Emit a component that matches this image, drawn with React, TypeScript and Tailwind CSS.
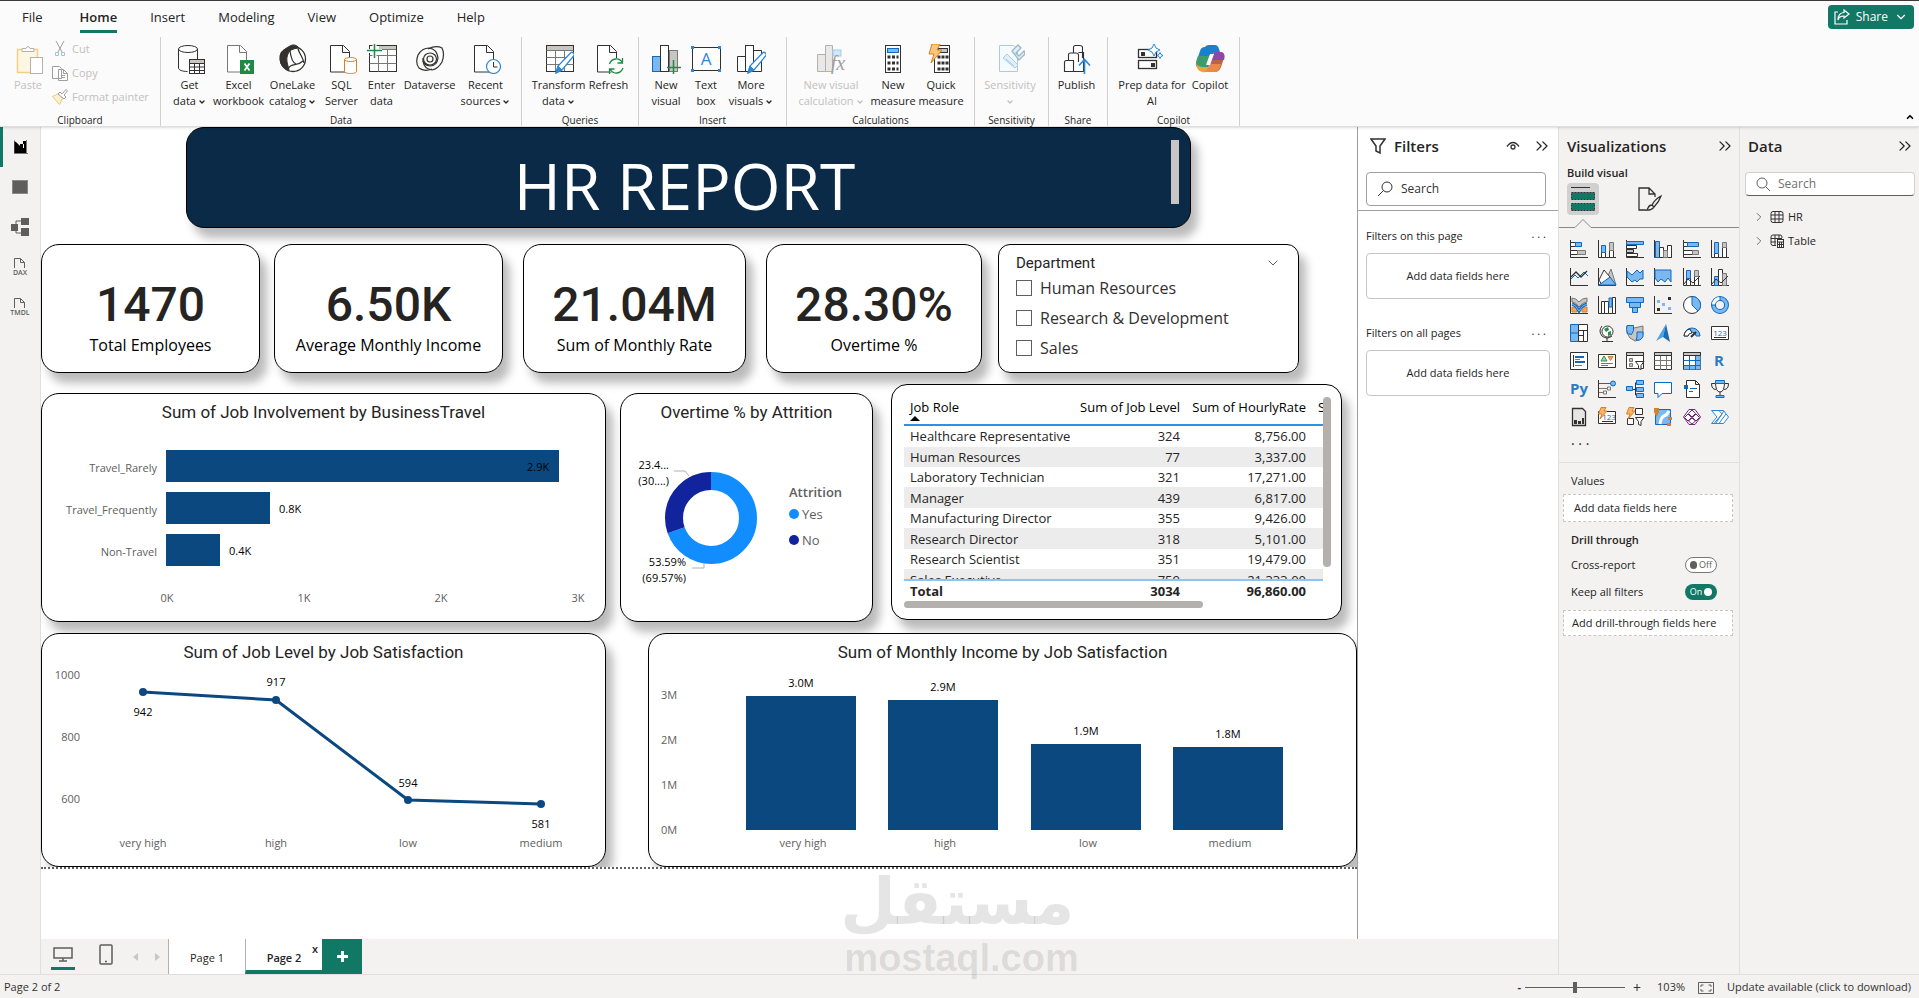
import type { ReactNode } from "react";
import { ChevronDown, ChevronRight, ChevronUp, ChevronsRight } from "lucide-react";

const INK = "#323130";
const GREY = "#c8c6c4";
const MID = "#797775";
const SKY = "#7ab8ef";
const BLUE = "#1068bf";
const GREEN = "#117865";
const ORANGE = "#d4812c";

function Icon30({ children }: { children: ReactNode }) {
  return (
    <svg viewBox="0 0 30 30" className="h-[30px] w-[30px] shrink-0" fill="none" stroke={INK} aria-hidden="true">
      {children}
    </svg>
  );
}

function Page({ stroke = INK }: { stroke?: string }) {
  return <path d="M3.5 1.5h13l6 6v20.500h-19zM15.500 1.500v7h7" fill="#fff" stroke={stroke} />;
}

function Pencil() {
  return (
    <>
      <path d="M12 29l2-7L27 8.500c1.500-1 4 1.500 3 3L18 26z" fill="#fff" stroke="#2b88d8" strokeWidth="1.300" />
      <path d="M12 29l2-7 4 4z" fill="#2b88d8" stroke="#2b88d8" />
    </>
  );
}

function Bolt() {
  return <path d="M6 0h8l-3 6h5L5 19l3-9H3z" fill="#fbc679" stroke={ORANGE} />;
}

const ribbonIcons: Record<string, ReactNode> = {
  getData: (
    <>
      <ellipse cx="13" cy="5" rx="9.500" ry="3.500" />
      <path d="M3.500 5v19c0 2 4 3.500 9 3.500M22.500 5v10" />
      <rect x="14.500" y="15.500" width="15" height="14" fill="#fff" />
      <rect x="15" y="16" width="14" height="3" fill={GREY} stroke="none" />
      <path d="M14.500 19.500h15M14.500 23h15M14.500 26.500h15M19.500 19v10.500M24.500 19v10.500" />
    </>
  ),
  excel: (
    <>
      <Page stroke="#797775" />
      <rect x="16" y="16" width="14" height="14" fill="#1e8b45" stroke="none" />
      <path d="M20.500 19.500l5 7M25.500 19.500l-5 7" stroke="#fff" strokeWidth="1.800" />
    </>
  ),
  oneLake: (
    <>
      <circle cx="15" cy="15" r="12.500" fill="#fff" strokeWidth="1.300" />
      <path d="M12 2Q17-1 21 4 17 4 13 6q-5 4-4 12l2 8Q3 24 2 16 1 7 8 5z" fill="#323130" />
      <path d="M12 7c1 7 3 12 6 13M20 5c2 6 5 8 6 14M10 25c3-7 9-2 15-8" strokeWidth="1.300" />
    </>
  ),
  sql: (
    <>
      <Page />
      <path d="M17.500 15.500v12c0 1.300 3 2 6 2s6-.7 6-2v-12z" fill="#fff" stroke={ORANGE} />
      <ellipse cx="23.500" cy="15.500" rx="6" ry="2" fill="#fff" stroke={ORANGE} />
    </>
  ),
  enter: (
    <>
      <rect x="2.500" y="1.500" width="27" height="26" fill="#fff" />
      <rect x="12" y="2" width="17" height="3" fill={GREY} stroke="none" />
      <path d="M2.500 11.500h27M2.500 19.500h27M11.500 11v16.500M20.500 5v22.500M12 5.500h17" stroke={MID} />
      <path d="M0 7h15M7.500 0v14" stroke="#fbfbfb" strokeWidth="4" />
      <path d="M0 6.500h15M7.500-1v15" stroke="#1e8b45" strokeWidth="1.500" />
    </>
  ),
  dataverse: (
    <g strokeWidth="1.200">
      <ellipse cx="15" cy="15" rx="6.500" ry="6" />
      <circle cx="15" cy="15" r="3" />
      <path d="M17 25Q9 28 4 24 0 19 3 11 7 4 14 4q8 1 9 10-1 8-8 8-8-1-7-8" />
      <path d="M13 5q8-4 14-1 3 6 0 14-4 7-10 8Q9 25 8 17" />
    </g>
  ),
  recent: (
    <>
      <Page />
      <circle cx="22.500" cy="22.500" r="7" fill="#fff" stroke="#2b88d8" strokeWidth="1.200" />
      <path d="M22.500 18v5h4" />
    </>
  ),
  transform: (
    <>
      <rect x="2.500" y="1.500" width="27" height="26" fill="#fff" />
      <rect x="3" y="2" width="26" height="4" fill={GREY} stroke="none" />
      <path d="M2.500 6.500h27M2.500 13.500h27M2.500 20.500h27M11.500 6v21M20.500 6v21" stroke={MID} />
      <Pencil />
    </>
  ),
  refresh: (
    <>
      <Page />
      <circle cx="22" cy="22" r="8" fill="#fbfbfb" stroke="none" />
      <path d="M15.500 20c2-6 10-7 13-1M28.500 14v5h-5M29 24c-2 6-10 7-13 1M15.500 30v-5h5" stroke="#1e8b45" strokeWidth="1.300" />
    </>
  ),
  newVisual: (
    <>
      <rect x="1.500" y="12.500" width="8" height="15" fill={SKY} stroke={BLUE} />
      <rect x="18.500" y="6.500" width="8" height="21" fill={GREY} stroke={MID} />
      <rect x="9.500" y="1.500" width="8" height="26" fill="#fff" />
      <path d="M16 23.500h14M22.500 16v14" stroke="#1e8b45" strokeWidth="1.500" />
    </>
  ),
  textBox: (
    <>
      <rect x="1.500" y="3.500" width="28" height="23" fill="#fff" />
      <path d="M0 2h3v3H0zM27 2h3v3h-3zM0 25h3v3H0zM27 25h3v3h-3z" fill="#2b88d8" stroke="none" />
      <text x="15" y="21" textAnchor="middle" fontSize="17" fill="#2b88d8" stroke="none">A</text>
    </>
  ),
  moreVisuals: (
    <>
      <path d="M1.500 12.500h8v15h-8zM17.500 6.500h8v21h-8z" fill="#fff" />
      <rect x="9.500" y="1.500" width="8" height="26" fill="#fff" />
      <Pencil />
    </>
  ),
  visualCalc: (
    <g stroke="#b3b0ad">
      <path d="M1.500 10.500h8v17h-8zM9.500 1.500h7v26h-7z" fill="#e8e8e8" />
      <rect x="17" y="6" width="8" height="6" fill="#cfe8fb" stroke="#9fcdf0" />
      <text x="22" y="26" textAnchor="middle" fontSize="20" fontStyle="italic" fill="#a19f9d" stroke="none" className="font-['Liberation_Serif',serif]">fx</text>
    </g>
  ),
  measure: (
    <>
      <rect x="7.500" y="1.500" width="15" height="27" fill="#fff" />
      <rect x="9.500" y="4.500" width="11" height="4" fill={SKY} stroke={BLUE} />
      <path d="M9.500 13h11M9.500 19h11M9.500 25h11" strokeWidth="3" strokeDasharray="3 1.500" />
    </>
  ),
  quick: (
    <>
      <rect x="8.500" y="1.500" width="15" height="27" fill="#fff" />
      <rect x="12.500" y="4.500" width="9" height="4" fill={GREY} />
      <path d="M11.500 13h11M11.500 19h11M11.500 25h11" strokeWidth="3" strokeDasharray="3 1" />
      <Bolt />
    </>
  ),
  sensitivity: (
    <g stroke="#a9cbe4">
      <path d="M4.500 1.500h14l4 4v22h-18z" fill="#f5fafd" />
      <path d="M8 14l4-4 11 11-3 3zM11 15l8 7" fill="#e1eff8" />
      <path d="M17 7l6-6 3 3-5 5 3 3 5-5 1 3-6 6z" fill="#e1eff8" stroke="#9bb9cc" strokeWidth="1.400" />
    </g>
  ),
  publish: (
    <g strokeWidth="1.100">
      <path d="M2.500 27.500v-9q0-2 2-2h7v11zM11.500 27.500h10v-19h-5M6.500 16v-5q0-2 2-2h5q3 0 3 2v7M11.500 9V3.500q0-2 2-2h4q3 0 3 2V14" fill="#fff" />
      <path d="M22.500 30V16M17 21.500l5.500-6 5.500 6" stroke="#2b88d8" strokeWidth="1.600" />
    </g>
  ),
  prep: (
    <>
      <rect x="1.500" y="5.500" width="18" height="8" fill="#fff" strokeWidth="1.300" />
      <rect x="1.500" y="16.500" width="18" height="8" fill="#fff" strokeWidth="1.300" />
      <path d="M4 8h4v4H4zM14 19h4v4h-4z" fill={INK} stroke="none" />
      <path d="M16 0l2 4 4 2-4 2-2 4-2-4-4-2 4-2z" fill="#fff" stroke="#2b88d8" transform="translate(1 0)" />
      <path d="M23 8.500l1 2 2 1-2 1-1 2-1-2-2-1 2-1z" fill="#fff" stroke="#2b88d8" />
    </>
  ),
  copilot: (
    <g stroke="none">
      <path d="M10 3Q11 1 14 1h6q3 0 4 4l1 3h-6l-2 5-4 11H4q-4-1-3-5l4-12Q6 3 10 3z" fill="#1b7fd0" />
      <path d="M3 12h12l-3 12H4q-5-3-1-12z" fill="#3d9b6d" />
      <path d="M1 19q2 4 7 4l6 0-2 4q-2 2-5 1Q1 26 1 19z" fill="#e8a33d" />
      <path d="M19 8h7q4 1 3 6l-3 9q-2 5-6 5H10q2 0 4-5z" fill="#b9634d" />
      <path d="M19 8h7q5 1 3 8H17z" fill="#8b4aa8" />
      <path d="M14 20h12q-2 8-6 8H10q3-2 4-8z" fill="#ea8a45" />
      <path d="M15 10h4l-4 11h-4z" fill="#fff" />
    </g>
  ),
};

type RibbonItem = { icon: string; lines: string[]; width: string; menu?: boolean; disabled?: boolean };

const ribbonGroups: { name: string; width: string; items: RibbonItem[] }[] = [
  {
    name: "Data",
    width: "w-[361px]",
    items: [
      { icon: "getData", lines: ["Get", "data"], width: "w-12", menu: true },
      { icon: "excel", lines: ["Excel", "workbook"], width: "w-[50px]" },
      { icon: "oneLake", lines: ["OneLake", "catalog"], width: "w-[58px]", menu: true },
      { icon: "sql", lines: ["SQL", "Server"], width: "w-10" },
      { icon: "enter", lines: ["Enter", "data"], width: "w-10" },
      { icon: "dataverse", lines: ["Dataverse"], width: "w-14" },
      { icon: "recent", lines: ["Recent", "sources"], width: "w-14", menu: true },
    ],
  },
  {
    name: "Queries",
    width: "w-[117px]",
    items: [
      { icon: "transform", lines: ["Transform", "data"], width: "w-[60px]", menu: true },
      { icon: "refresh", lines: ["Refresh"], width: "w-10" },
    ],
  },
  {
    name: "Insert",
    width: "w-[148px]",
    items: [
      { icon: "newVisual", lines: ["New", "visual"], width: "w-10" },
      { icon: "textBox", lines: ["Text", "box"], width: "w-10" },
      { icon: "moreVisuals", lines: ["More", "visuals"], width: "w-[50px]", menu: true },
    ],
  },
  {
    name: "Calculations",
    width: "w-[188px]",
    items: [
      { icon: "visualCalc", lines: ["New visual", "calculation"], width: "w-[76px]", menu: true, disabled: true },
      { icon: "measure", lines: ["New", "measure"], width: "w-12" },
      { icon: "quick", lines: ["Quick", "measure"], width: "w-12" },
    ],
  },
  {
    name: "Sensitivity",
    width: "w-[74px]",
    items: [{ icon: "sensitivity", lines: ["Sensitivity", ""], width: "w-16", menu: true, disabled: true }],
  },
  { name: "Share", width: "w-[59px]", items: [{ icon: "publish", lines: ["Publish"], width: "w-12" }] },
  {
    name: "Copilot",
    width: "w-[132px]",
    items: [
      { icon: "prep", lines: ["Prep data for", "AI"], width: "w-[76px]" },
      { icon: "copilot", lines: ["Copilot"], width: "w-10" },
    ],
  },
];

function RibbonButton({ icon, lines, width, menu, disabled }: RibbonItem) {
  return (
    <button
      disabled={disabled}
      className={`flex flex-col items-center whitespace-nowrap leading-4 ${width} ${disabled ? "text-[#c2c0be]" : "text-[#252423]"}`}
    >
      <Icon30>{ribbonIcons[icon]}</Icon30>
      <span className="mt-[3px]">{lines[0]}</span>
      {lines.length > 1 && (
        <span className="flex h-4 items-center gap-0.5">
          {lines[1]}
          {menu && <ChevronDown className="mt-0.5 h-2 w-2" strokeWidth={4} />}
        </span>
      )}
    </button>
  );
}

function Ribbon() {
  return (
    <div className="flex h-[89px]">
      <section className="flex w-[161px] shrink-0 flex-col border-r border-[#d2d0ce] text-[#c2c0be]">
        <div className="flex grow pl-3">
          <button disabled className="flex w-8 flex-col items-center pt-[7px] leading-4">
            <Icon30>
              <path d="M4.500 5.500h20v23h-20z" fill="#fdf6e3" stroke="#f3cf86" strokeWidth="1.500" />
              <path d="M9 7.500v-3h4q2-4 4 0h4v3z" fill="#fff" stroke="#b3b0ad" />
              <rect x="17.500" y="13.500" width="12" height="16" fill="#fff" stroke="#b3b0ad" />
            </Icon30>
            <span className="mt-[3px]">Paste</span>
          </button>
          <div className="flex flex-col gap-2 pt-1 pl-2">
            <button disabled className="flex h-4 items-center gap-1">
              <svg viewBox="0 0 16 16" className="h-4 w-4" fill="none" stroke="#a19f9d">
                <path d="M4 0l6 11M12 0L6 11" />
                <path d="M3.500 11.500h3v3h-3zM9.500 11.500h3v3h-3z" stroke="#9ec3df" />
              </svg>
              Cut
            </button>
            <button disabled className="flex h-4 items-center gap-1">
              <svg viewBox="0 0 16 16" className="h-4 w-4" fill="#fff" stroke="#a19f9d">
                <path d="M.5 13.500V1.500h7l2 2v10zM6.500 4.500h5l4 4v7h-9zM11.500 4.500v4h4M9 10.500h4M9 12.500h4" />
              </svg>
              Copy
            </button>
            <button disabled className="flex h-4 items-center gap-1">
              <svg viewBox="0 0 16 16" className="h-4 w-4" fill="#fff" stroke="#a19f9d">
                <path d="M.5 7.500l6-3 4 5-3 6z" fill="#fdf0d2" stroke="#f0c775" />
                <path d="M6 5l2-2 2 2 4-4.500 1.500 1.500L12 6l2 2-2 2z" />
              </svg>
              Format painter
            </button>
          </div>
        </div>
        <span className="text-center text-[10px] leading-3 text-[#252423]">Clipboard</span>
      </section>
      {ribbonGroups.map((group) => (
        <section key={group.name} className={`flex shrink-0 flex-col border-r border-[#d2d0ce] ${group.width}`}>
          <div className="flex grow justify-center pt-[7px] pr-[3px]">
            {group.items.map((item) => (
              <RibbonButton key={item.icon} {...item} />
            ))}
          </div>
          <span className="text-center text-[10px] leading-3 text-[#252423]">{group.name}</span>
        </section>
      ))}
      <button className="mt-auto ml-auto px-1 py-1" aria-label="Collapse ribbon">
        <ChevronUp className="h-2.5 w-2.5" strokeWidth={4} />
      </button>
    </div>
  );
}

function Header() {
  return (
    <header className="relative z-10 border-t border-b border-t-[#3b3a39] border-b-[#e1dfdd] bg-[#fbfbfb] shadow-sm">
      <nav className="flex h-9 items-start gap-[33px] pr-[5px] pl-[22px] text-[13px] leading-8 text-[#252423]">
        <button className="mr-1">File</button>
        <button className="h-8 border-b-[3px] border-[#117865] font-semibold">Home</button>
        <button>Insert</button>
        <button>Modeling</button>
        <button>View</button>
        <button>Optimize</button>
        <button>Help</button>
        <button className="mt-1 ml-auto flex h-6 items-center gap-1.5 rounded bg-[#117865] px-1.5 text-xs text-white">
          <svg viewBox="0 0 16 16" className="h-4 w-4" fill="none" stroke="#fff" strokeWidth="1.200">
            <path d="M4 3H1v12h12v-4M10 1l5 4-5 4V7Q5 7 4 11q0-7 6-7.500z" />
          </svg>
          Share
          <ChevronDown className="h-3.5 w-3.5" />
        </button>
      </nav>
      <Ribbon />
    </header>
  );
}

function DocIcon({ label }: { label: string }) {
  return (
    <svg viewBox="0 0 20 20" className="h-5 w-5" fill="none" stroke="#605e5c">
      <path d="M4.500 11V1.500h6l4 4V11M10.500 1.500v4h4" />
      <text x="10" y="18" textAnchor="middle" fontSize="7" fontWeight="600" fill="#605e5c" stroke="none">
        {label}
      </text>
    </svg>
  );
}

function Rail() {
  return (
    <nav className="flex w-[41px] shrink-0 flex-col border-r border-[#e1dfdd] bg-[#f3f2f1]">
      <button className="flex h-10 items-center justify-center border-l-[3px] border-[#117865] pr-0.5" aria-label="Report view">
        <svg viewBox="0 0 14 14" className="h-3.5 w-3.5">
          <path d="M0 1l2 1 4 4V4h3V1h3v13H0z" fill="#000" />
          <path d="M0 0v13.500h14M12.500 0v13" fill="none" stroke="#797775" />
          <path d="M9.500 4v4" stroke="#f3f2f1" />
        </svg>
      </button>
      <button className="flex h-10 items-center justify-center" aria-label="Table view">
        <span className="h-3.5 w-4 border border-[#8a8886] bg-[#605e5c]" />
      </button>
      <button className="flex h-10 items-center justify-center" aria-label="Model view">
        <svg viewBox="0 0 18 18" className="h-[18px] w-[18px]" fill="#605e5c">
          <path d="M0 6h7v7H0zM10 0h8v7h-8zM10 10h8v8h-8z" />
          <path d="M5 6V3h6M5 12v3h6" fill="none" stroke="#605e5c" />
        </svg>
      </button>
      <button className="flex h-10 items-center justify-center" aria-label="DAX query view">
        <DocIcon label="DAX" />
      </button>
      <button className="flex h-10 items-center justify-center" aria-label="TMDL view">
        <DocIcon label="TMDL" />
      </button>
    </nav>
  );
}

const CARD = "border border-black bg-white shadow-[7px_10px_10px_rgba(0,0,0,0.27)]";

function Kpi({ value, label, className }: { value: string; label: string; className: string }) {
  return (
    <article className={`flex min-w-0 flex-col items-center rounded-[18px] pt-8 ${CARD} ${className}`}>
      <strong className="font-[Roboto,sans-serif] text-5xl leading-[56px] font-medium text-[#252423]">{value}</strong>
      <span className="text-base leading-6 whitespace-nowrap text-black">{label}</span>
    </article>
  );
}

function Slicer() {
  return (
    <fieldset className={`min-w-0 rounded-xl px-[17px] pt-2 ${CARD}`}>
      <div className="flex h-5 items-center justify-between font-[Roboto,sans-serif] text-[15px] text-[#252423]">
        Department
        <ChevronDown className="h-4 w-4 text-[#605e5c]" strokeWidth={1.5} />
      </div>
      {["Human Resources", "Research & Development", "Sales"].map((name) => (
        <label key={name} className="flex h-[30px] items-center gap-2 text-base whitespace-nowrap text-[#323130]">
          <input type="checkbox" className="h-4 w-4 appearance-none border border-[#605e5c] bg-white" />
          {name}
        </label>
      ))}
    </fieldset>
  );
}

function ChartCard({ title, className = "", children }: { title: string; className?: string; children: ReactNode }) {
  return (
    <article className={`min-w-0 rounded-[18px] ${CARD} ${className}`}>
      <h3 className="h-9 text-center font-[Roboto,sans-serif] text-[17px] leading-9 text-[#252423]">{title}</h3>
      {children}
    </article>
  );
}

const travel = [
  { name: "Travel_Rarely", y: 20, width: 393, label: "2.9K", labelX: 485 },
  { name: "Travel_Frequently", y: 62, width: 104, label: "0.8K", labelX: 237 },
  { name: "Non-Travel", y: 104, width: 54, label: "0.4K", labelX: 187 },
];

function TravelChart() {
  return (
    <svg viewBox="0 0 563 191" className="w-full text-[11px]" dominantBaseline="central">
      {travel.map((bar) => (
        <g key={bar.name}>
          <text x="115" y={bar.y + 17} textAnchor="end" fill="#605e5c">{bar.name}</text>
          <rect x="124" y={bar.y} width={bar.width} height="32" fill="#0b4880" />
          <text x={bar.labelX} y={bar.y + 16} fill="#000">{bar.label}</text>
        </g>
      ))}
      {["0K", "1K", "2K", "3K"].map((tick, i) => (
        <text key={tick} x={125 + i * 137} y="167" textAnchor="middle" fill="#605e5c">{tick}</text>
      ))}
    </svg>
  );
}

function AttritionChart() {
  return (
    <svg viewBox="0 0 251 191" className="w-full text-[11px]" dominantBaseline="central">
      <g fill="none" strokeWidth="18" transform="rotate(-90 90 88)">
        <circle cx="90" cy="88" r="37" stroke="#118dff" pathLength="100" strokeDasharray="69.57 30.43" />
        <circle cx="90" cy="88" r="37" stroke="#12239e" pathLength="100" strokeDasharray="30.43 69.57" strokeDashoffset="-69.57" />
      </g>
      <path d="M53 41h11l4 5M83 134v4H71" fill="none" stroke="#b3b0ad" />
      <g textAnchor="end" fill="#000">
        <text x="48" y="34">23.4...</text>
        <text x="48" y="50">(30....)</text>
        <text x="65" y="131">53.59%</text>
        <text x="65" y="147">(69.57%)</text>
      </g>
      <g className="text-[13px]" fill="#605e5c">
        <text x="168" y="62" className="font-semibold">Attrition</text>
        <circle cx="173" cy="84" r="5" fill="#118dff" />
        <text x="181" y="84">Yes</text>
        <circle cx="173" cy="110" r="5" fill="#12239e" />
        <text x="181" y="110">No</text>
      </g>
    </svg>
  );
}

const levels = [
  { name: "very high", x: 101, y: 22, value: 942, labelY: 41 },
  { name: "high", x: 234, y: 30, value: 917, labelY: 11 },
  { name: "low", x: 366, y: 130, value: 594, labelY: 112 },
  { name: "medium", x: 499, y: 134, value: 581, labelY: 153 },
];

function LevelChart() {
  return (
    <svg viewBox="0 0 563 190" className="w-full overflow-visible text-[11px]" dominantBaseline="central">
      {["1000", "800", "600"].map((tick, i) => (
        <text key={tick} x="38" y={4 + i * 62} textAnchor="end" fill="#605e5c">{tick}</text>
      ))}
      <polyline points={levels.map((p) => `${p.x},${p.y}`).join(" ")} fill="none" stroke="#0b4880" strokeWidth="3" />
      {levels.map((p) => (
        <g key={p.name} textAnchor="middle">
          <circle cx={p.x} cy={p.y} r="4" fill="#0b4880" />
          <text x={p.x} y={p.labelY} fill="#000">{p.value}</text>
          <text x={p.x} y="172" fill="#605e5c">{p.name}</text>
        </g>
      ))}
    </svg>
  );
}

const income = [
  { name: "very high", x: 97, top: 26, label: "3.0M" },
  { name: "high", x: 239, top: 30, label: "2.9M" },
  { name: "low", x: 382, top: 74, label: "1.9M" },
  { name: "medium", x: 524, top: 77, label: "1.8M" },
];

function IncomeChart() {
  return (
    <svg viewBox="0 0 707 190" className="w-full text-[11px]" dominantBaseline="central">
      {["3M", "2M", "1M", "0M"].map((tick, i) => (
        <text key={tick} x="12" y={24 + i * 45} fill="#605e5c">{tick}</text>
      ))}
      {income.map((bar) => (
        <g key={bar.name} textAnchor="middle">
          <rect x={bar.x} y={bar.top} width="110" height={160 - bar.top} fill="#0b4880" />
          <text x={bar.x + 55} y={bar.top - 14} fill="#000">{bar.label}</text>
          <text x={bar.x + 57} y="172" fill="#605e5c">{bar.name}</text>
        </g>
      ))}
    </svg>
  );
}

const roles = [
  ["Healthcare Representative", "324", "8,756.00"],
  ["Human Resources", "77", "3,337.00"],
  ["Laboratory Technician", "321", "17,271.00"],
  ["Manager", "439", "6,817.00"],
  ["Manufacturing Director", "355", "9,426.00"],
  ["Research Director", "318", "5,101.00"],
  ["Research Scientist", "351", "19,479.00"],
  ["Sales Executive", "759", "21,333.00"],
];

function RoleColumns() {
  return (
    <colgroup>
      <col className="w-[168px]" />
      <col className="w-[114px]" />
      <col className="w-[126px]" />
      <col />
    </colgroup>
  );
}

function RoleTable() {
  return (
    <article className={`-mt-[9px] mb-0.5 flex min-w-0 flex-col rounded-2xl pt-3 pr-2.5 pl-3 text-[13px] text-[#252423] ${CARD}`}>
      <div className="flex">
        <div className="h-[184px] min-w-0 grow overflow-hidden border-b-2 border-[#8cc4f2]">
          <table className="h-[193px] w-full table-fixed">
            <RoleColumns />
            <thead>
              <tr className="h-[28px] border-b-2 border-[#2f8fe0] text-right align-top leading-5 whitespace-nowrap text-[#000]">
                <th className="pl-1.5 text-left font-normal">
                  Job Role
                  <svg viewBox="0 0 10 5" className="-mt-px h-[5px] w-2.5">
                    <path d="M0 5l5-5 5 5z" />
                  </svg>
                </th>
                <th className="pr-1.5 font-normal">Sum of Job Level</th>
                <th className="pr-1.5 font-normal">Sum of HourlyRate</th>
                <th className="overflow-hidden pl-1.5 text-left font-normal">Sum of MonthlyIncome</th>
              </tr>
            </thead>
            <tbody>
              {roles.map(([role, level, rate]) => (
                <tr key={role} className="text-right leading-5 whitespace-nowrap even:bg-[#ececec]">
                  <td className="pl-1.5 text-left">{role}</td>
                  <td className="pr-1.5">{level}</td>
                  <td className="pr-1.5">{rate}</td>
                  <td />
                </tr>
              ))}
            </tbody>
          </table>
        </div>
        <div className="h-[170px] w-2 shrink-0 rounded-full bg-[#b3b0ad]" />
      </div>
      <table className="mr-2 table-fixed">
        <RoleColumns />
        <tbody>
          <tr className="h-5 text-right leading-5 font-bold">
            <td className="pl-1.5 text-left">Total</td>
            <td className="pr-1.5">3034</td>
            <td className="pr-1.5">96,860.00</td>
            <td />
          </tr>
        </tbody>
      </table>
      <div className="h-[7px] w-[70%] rounded-full bg-[#b3b0ad]" />
    </article>
  );
}

function Report() {
  return (
    <div className="overflow-hidden border-b-2 border-dotted border-[#605e5c]">
      <div className="ml-[11%] flex h-[101px] w-[76.4%] justify-end rounded-[18px] border border-black bg-[#0b2a47] pt-3 pr-[11px] shadow-[7px_10px_10px_rgba(0,0,0,0.27)]">
        <h1 className="grow pl-[11px] text-center text-[64px] leading-[92px] text-white">HR REPORT</h1>
        <div className="h-16 w-2 bg-[#c8c6c4]" />
      </div>
      <div className="mt-4 grid h-[129px] grid-cols-[233fr_249fr_243fr_232fr_301fr] pr-[58px]">
        <Kpi value="1470" label="Total Employees" className="mr-3.5" />
        <Kpi value="6.50K" label="Average Monthly Income" className="mr-5" />
        <Kpi value="21.04M" label="Sum of Monthly Rate" className="mr-5" />
        <Kpi value="28.30%" label="Overtime %" className="mr-4" />
        <Slicer />
      </div>
      <div className="mt-5 grid h-[229px] grid-cols-[579fr_271fr_451fr] pr-[15px]">
        <ChartCard title="Sum of Job Involvement by BusinessTravel" className="mr-3.5">
          <TravelChart />
        </ChartCard>
        <ChartCard title="Overtime % by Attrition" className="mr-[18px]">
          <AttritionChart />
        </ChartCard>
        <RoleTable />
      </div>
      <div className="mt-[11px] grid h-[234px] grid-cols-[607fr_709fr]">
        <ChartCard title="Sum of Job Level by Job Satisfaction" className="mr-[42px]">
          <LevelChart />
        </ChartCard>
        <ChartCard title="Sum of Monthly Income by Job Satisfaction">
          <IncomeChart />
        </ChartCard>
      </div>
    </div>
  );
}

function PageTabs() {
  return (
    <div className="flex h-[35px] shrink-0 bg-[#f3f2f1] text-[11px] text-[#252423]">
      <button className="mb-1 ml-2.5 flex w-6 flex-col items-center justify-between border-b-[3px] border-[#117865] pt-2" aria-label="Desktop layout">
        <svg viewBox="0 0 20 15" className="h-[15px] w-5" fill="none" stroke="#605e5c" strokeWidth="1.500">
          <path d="M1 1h18v10H1zM10 11v3M6 14h8" />
        </svg>
      </button>
      <button className="ml-6 pb-1" aria-label="Mobile layout">
        <svg viewBox="0 0 14 21" className="h-[21px] w-3.5" fill="none" stroke="#605e5c" strokeWidth="1.500">
          <rect x="1" y="1" width="12" height="19" rx="1" />
          <path d="M6 17.500h2" />
        </svg>
      </button>
      <button className="ml-5" aria-label="Previous page">
        <svg viewBox="0 0 5 8" className="h-2 w-[5px]" fill="#c8c6c4"><path d="M5 0v8L0 4z" /></svg>
      </button>
      <button className="mr-2 ml-[17px]" aria-label="Next page">
        <svg viewBox="0 0 5 8" className="h-2 w-[5px]" fill="#c8c6c4"><path d="M0 0v8l5-4z" /></svg>
      </button>
      <button className="w-[77px] border-l border-[#b3b0ad] bg-white pt-1">Page 1</button>
      <button className="relative w-[77px] border-b-4 border-l border-b-[#117865] border-l-[#b3b0ad] bg-white pt-2 font-semibold">
        Page 2
        <span className="absolute top-0 right-1 leading-5">x</span>
      </button>
      <button className="w-10 bg-[#117865] text-white" aria-label="New page">
        <svg viewBox="0 0 11 11" className="mx-auto h-[11px] w-[11px]" stroke="#fff" strokeWidth="3">
          <path d="M5.500 0v11M0 5.500h11" />
        </svg>
      </button>
    </div>
  );
}

function DropBox() {
  return (
    <div className="mt-[9px] flex h-[46px] items-center justify-center rounded-sm border border-[#c8c6c4]">
      Add data fields here
    </div>
  );
}

function FiltersPane() {
  return (
    <aside className="flex w-[201px] shrink-0 flex-col border-l border-[#a19f9d] bg-white text-[11px] text-[#252423]">
      <div className="flex h-[38px] items-center pr-1.5 pl-3">
        <svg viewBox="0 0 16 16" className="mr-2 h-4 w-4" fill="none" stroke={INK} strokeWidth="1.500">
          <path d="M1 1h14L10 8v7l-4-2V8z" />
        </svg>
        <h2 className="text-[15px] font-semibold">Filters</h2>
        <svg viewBox="0 0 14 10" className="ml-auto h-2.5 w-3.5" fill="none" stroke={INK} strokeWidth="1.300">
          <path d="M1 5.500q6-8 12 0" />
          <circle cx="7" cy="6" r="2" />
        </svg>
        <ChevronsRight className="ml-3 h-5 w-5" strokeWidth={1.5} />
      </div>
      <div className="border-b border-[#a19f9d] pr-3 pb-1 pl-2">
        <label className="mt-[7px] flex h-[34px] items-center gap-2 rounded-sm border border-[#a19f9d] px-2.5">
          <svg viewBox="0 0 16 16" className="h-4 w-4 shrink-0" fill="none" stroke={INK}>
            <circle cx="10" cy="6" r="5" />
            <path d="M6.500 9.500L1 15" />
          </svg>
          <input aria-label="Search filters" placeholder="Search" className="w-full text-xs outline-none placeholder:text-[#323130]" />
        </label>
      </div>
      <div className="grow pr-2 pl-2">
        <div className="mt-[17px] flex h-4 items-center justify-between">
          Filters on this page
          <button className="mr-1 pb-1" aria-label="More options">. . .</button>
        </div>
        <DropBox />
        <div className="mt-[26px] flex h-4 items-center justify-between">
          Filters on all pages
          <button className="mr-1 pb-1" aria-label="More options">. . .</button>
        </div>
        <DropBox />
      </div>
      <div className="-ml-px h-[35px] bg-[#f3f2f1]" />
    </aside>
  );
}

const axes = <path d="M.5 0v17.500H18" stroke={INK} />;
const boltSmall = <path d="M3-.5h5L6 3h3L2 11l2-5H.5z" fill="#fbb36a" stroke={ORANGE} />;
const funnelSmall = <path d="M9.500 9.500h8.500l-3 4v4l-2.500-1v-3z" fill="#fff" stroke={INK} />;

const visuals: [string, ReactNode][] = [
  ["Stacked bar chart", <>{axes}<path d="M.5 2.500h5v4h-5zM.5 10.500h7v4h-7z" fill="#fff" stroke={INK} /><path d="M5.500 2.500h6v4h-6z" fill={SKY} stroke={BLUE} /><path d="M7.500 10.500h8v4h-8z" fill={GREY} stroke={MID} /></>],
  ["Stacked column chart", <>{axes}<path d="M3.500 12.500h4v5h-4zM11.500 10.500h4v7h-4z" fill="#fff" stroke={INK} /><path d="M3.500 5.500h4v7h-4z" fill={SKY} stroke={BLUE} /><path d="M11.500 2.500h4v8h-4z" fill={GREY} stroke={MID} /></>],
  ["Clustered bar chart", <>{axes}<path d="M.5 1.500h17v3H.5z" fill={SKY} stroke={BLUE} /><path d="M.5 5.500h10v3H.5zM.5 13.500h11v3H.5z" fill="#fff" stroke={INK} /><path d="M.5 9.500h7v3h-7z" fill={GREY} stroke={INK} /></>],
  ["Clustered column chart", <>{axes}<path d="M1.500 1.500h4v16h-4z" fill={SKY} stroke={BLUE} /><path d="M5.500 7.500h4v10h-4zM13.500 5.500h4v12h-4z" fill="#fff" stroke={INK} /><path d="M9.500 10.500h4v7h-4z" fill={GREY} stroke={MID} /></>],
  ["100% stacked bar chart", <>{axes}<path d="M.5 2.500h4v4h-4zM.5 10.500h9v4h-9z" fill="#fff" stroke={INK} /><path d="M4.500 2.500h11v4h-11z" fill={SKY} stroke={BLUE} /><path d="M9.500 10.500h6v4h-6z" fill={GREY} stroke={MID} /></>],
  ["100% stacked column chart", <>{axes}<path d="M3.500 13.500h4v4h-4zM11.500 7.500h4v10h-4z" fill="#fff" stroke={INK} /><path d="M3.500 2.500h4v11h-4z" fill={SKY} stroke={BLUE} /><path d="M11.500 2.500h4v5h-4z" fill={GREY} stroke={MID} /></>],
  ["Line chart", <>{axes}<path d="M1 11l4-4 3 3 6-6 4 4" stroke={BLUE} /><path d="M1 9l5-5 5 5 6-6" stroke={INK} strokeWidth="1.300" /></>],
  ["Area chart", <>{axes}<path d="M9 10l4-9 5 16z" fill={GREY} stroke={MID} /><path d="M1 12l5-10 6 7-8 8z" fill="#fff" stroke={INK} /><path d="M1 17l11-8 6 8z" fill={SKY} stroke={BLUE} /></>],
  ["Stacked area chart", <>{axes}<path d="M1 3l5 4 5-5 3 3 3-3v9l-3 0-3 3-2-2-3 2-5-5z" fill={SKY} stroke={BLUE} /></>],
  ["100% stacked area chart", <>{axes}<path d="M1 2h16v12l-3-4-3 4-4-3-3 3-3-4z" fill={SKY} stroke={BLUE} /></>],
  ["Line and stacked column chart", <>{axes}<path d="M3.500 10h4v7.500h-4zM11.500 8h4v9.500h-4z" fill="#fff" stroke={INK} /><path d="M3.500 2.500h4v8h-4z" fill={SKY} stroke={BLUE} /><path d="M11.500 2.500h4v6h-4z" fill={GREY} stroke={MID} /><path d="M1 16l4-5 5 4 7-7" stroke={INK} /></>],
  ["Line and clustered column chart", <>{axes}<path d="M3.500 8.500h4v9h-4z" fill={SKY} stroke={BLUE} /><path d="M7.500 1.500h4v16h-4z" fill="#fff" stroke={INK} /><path d="M11.500 5.500h4v12h-4z" fill={GREY} stroke={MID} /><path d="M1 16l4-5 5 4 7-7" stroke={INK} /></>],
  ["Ribbon chart", <>{axes}<path d="M2 11h5v5H2zM12 11h5v5h-5zM7 6h4v4H7z" fill="#f3a45c" stroke={ORANGE} /><path d="M2 2q4 0 7 4 3-4 8-4v4q-4 0-8 5-3-5-7-5z" fill={GREY} stroke={MID} /><path d="M2 8q4 1 7 7 3-6 8-7" stroke={BLUE} strokeWidth="3" /><path d="M2 8q4 1 7 7 3-6 8-7" stroke={SKY} /></>],
  ["Waterfall chart", <>{axes}<path d="M3.500 5.500h3v12h-3zM6.500 5.500h4v12h-4zM14.500 1.500h3v16h-3z" fill="#fff" stroke={INK} /><path d="M11 2h3v9h-3z" fill={SKY} stroke={BLUE} /></>],
  ["Funnel", <><path d="M.5 1.500h17v5H.5zM3.500 6.500h11v5h-11zM6.500 11.500h5v5h-5z" fill={SKY} stroke={BLUE} /></>],
  ["Scatter chart", <>{axes}<path d="M3 12h3v3H3zM14 1h3v3h-3z" fill={INK} /><path d="M3 4h3v3H3zM8 7h3v3H8zM14 11h3v3h-3z" fill={SKY} /></>],
  ["Pie chart", <><circle cx="9" cy="9" r="8.500" fill="#fff" stroke={INK} /><path d="M9 .5a8.500 8.500 0 0 1 6 14.500L9 9z" fill={SKY} stroke={BLUE} /></>],
  ["Donut chart", <><circle cx="9" cy="9" r="6.500" stroke={BLUE} strokeWidth="5" /><circle cx="9" cy="9" r="6.500" stroke={SKY} strokeWidth="3" /><path d="M2.500 9A6.500 6.500 0 0 1 9 2.500" stroke="#fff" strokeWidth="3" /><path d="M9 0v5M0 9h5" stroke={BLUE} /></>],
  ["Treemap", <><path d="M.5.5h8v17h-8z" fill={SKY} stroke={BLUE} /><path d="M.5 9h8" stroke={BLUE} /><path d="M8.500.5h9v17h-9zM8.500 6.500h9M13.500 6.500v11M8.500 11.500h5" fill="#fff" stroke={INK} /></>],
  ["Map", <><circle cx="9.500" cy="7.500" r="5.500" fill="#fff" stroke={INK} /><path d="M6 5l4-2 1 3-3 2zM10 8l3-1v4l-3 1z" fill="#2d8a4e" /><path d="M4 2q-4 5 0 10 5 4 10 0M9 14v3M4 17.500h11" stroke={INK} /></>],
  ["Filled map", <><path d="M1 2l7 2 9-2v9l-4 5-4 1-5-3-3-5z" fill={GREY} stroke={MID} /><path d="M1 1.500h6.500v5l-2 4-4-1-1-4zM11 8h6v5l-3 3h-4l1-3z" fill={SKY} stroke={BLUE} /></>],
  ["Azure map", <><path d="M12 0L2 17l7-4z" fill="#4aa3e8" /><path d="M12 0l4 18-7-5z" fill="#1b6bb5" /></>],
  ["Gauge", <><path d="M1 12a8 8 0 0 1 16 0h-4a4 4 0 0 0-8 0z" fill={SKY} stroke={BLUE} /><path d="M1 12a8 8 0 0 1 6-7l2 4a4 4 0 0 0-4 3z" fill="#fff" stroke={INK} /><path d="M8 13l5-5" stroke={INK} strokeWidth="2" /></>],
  ["Card", <><path d="M.5 2.500h17v13H.5zM3 13.500h12" fill="#fff" stroke={INK} /><text x="9" y="11.500" textAnchor="middle" fontSize="8" fill={BLUE}>123</text></>],
  ["Multi-row card", <><path d="M.5.500h17v17H.5zM3.500 3v12" fill="#fff" stroke={INK} /><path d="M5 5h9M5 10h10" stroke={BLUE} strokeWidth="2" /><path d="M5 7.500h5M5 13.500h7" stroke={MID} /></>],
  ["KPI", <><path d="M.5 2.500h17v13H.5z" fill="#fff" stroke={INK} /><path d="M3 9l3-5 3 5z" fill="#9fd8b4" stroke="#2d8a4e" /><path d="M10 4.500h5l-2.500 4z" fill="#f3a45c" stroke={ORANGE} /><path d="M3 11.500h12M3 13.500h7" stroke={MID} /></>],
  ["Slicer", <><path d="M.5.500h17v16H.5z" fill="#fff" stroke={INK} /><path d="M.5.500h17v3H.5z" fill={GREY} stroke={INK} /><path d="M3.500 6.500h3v3h-3zM3.500 11.500h3v3h-3z" fill={GREY} stroke={MID} />{funnelSmall}</>],
  ["Table", <><path d="M.5.500h17v17H.5z" fill="#fff" stroke={INK} /><path d="M.5 8.500h17M.5 13.500h17M6.500 4v14M12.500 4v14" stroke={MID} /><path d="M.5.500h17v3H.5z" fill={GREY} stroke={INK} /></>],
  ["Matrix", <><path d="M.5.500h17v17H.5z" fill="#fff" stroke={INK} /><path d="M12 4h5.500v13.500H1V13h11z" fill={SKY} /><path d="M.5 8.500h17M.5 13.500h17M6.500 4v14M12.500 4v14" stroke={BLUE} /><path d="M.5.500h17v3H.5z" fill={GREY} stroke={INK} /></>],
  ["R script visual", <text x="8" y="14" textAnchor="middle" fontSize="15" fontWeight="bold" fill="#2b7cc4">R</text>],
  ["Python visual", <text x="9" y="14" textAnchor="middle" fontSize="15" fontWeight="bold" fill="#2b7cc4">Py</text>],
  ["Key influencers", <>{axes}<path d="M1 3.500h12" stroke={BLUE} /><circle cx="15" cy="3.500" r="2.500" fill={SKY} stroke={BLUE} /><path d="M1 8.500h8M1 12.500h4M9.500 7h3v3h-3zM5.500 11h3v3h-3z" stroke={MID} /></>],
  ["Decomposition tree", <><path d="M6 9.500h3M9.500 3v12M9.500 2.500h2M9.500 9.500h2M9.500 15h2" stroke={INK} /><path d="M.5 6.500h6v4h-6zM10.500.500h7v4h-7zM10.500 7.500h7v4h-7zM10.500 13.500h7v4h-7z" fill={SKY} stroke={BLUE} /></>],
  ["Q&A", <path d="M.5 2.500h17v11H8l-4 4v-4H.5z" fill="#fff" stroke={BLUE} />],
  ["Narrative", <><path d="M3.500.500h9l4 4v13h-13zM12.500.500v4h4" fill="#fff" stroke={INK} /><path d="M1 5h4v4H1z" fill={BLUE} /><path d="M7 8.500h7M6 11.500h4" stroke={BLUE} /></>],
  ["Goals", <><path d="M4.500 3.500H.5q0 6 4.500 6M13.500 3.500h4q0 6-4.500 6M9 12v4" stroke={INK} /><path d="M4.500 2q0 10 4.500 10t4.500-10z" fill="#fff" stroke={INK} /><path d="M4.500.500h9v3h-9zM5 15.500h8v2H5z" fill={SKY} stroke={BLUE} /></>],
  ["Paginated report", <><path d="M2.500.500h10l3 3v14h-13z" fill="#e8e6e4" stroke={INK} strokeWidth="1.300" /><path d="M4 12h3v4H4zM8 13h3v3H8zM12 10h2v6h-2z" fill={INK} /></>],
  ["Card (new)", <><path d="M.5 3.500h17v12H.5zM4 13.500h11" fill="#fff" stroke={INK} /><text x="11" y="12" textAnchor="middle" fontSize="8" fill={BLUE}>123</text>{boltSmall}</>],
  ["Slicer (new)", <><path d="M9.500.500h7v6h-7zM1.500 10.500h6v6h-6z" fill="#fff" stroke={INK} />{boltSmall}{funnelSmall}</>],
  ["ArcGIS map", <><path d="M1.500 1.500h15v15h-15z" fill={SKY} stroke={BLUE} /><path d="M15 3q-2 4-5 5t-4 8" stroke="#fff" strokeWidth="3" /><path d="M0 0h5v4L2.500 9 0 4zM14 9h4v3h-4zM13 15h4v3h-4z" fill={ORANGE} /></>],
  ["Power Apps", <><path d="M6 1.500h6l5.500 7.500-5.500 7.500H6L.5 9z" fill="#fff" stroke="#742774" /><path d="M9 2l3.500 3.500L9 9 5.500 5.500zM5 6l3.500 3.500L5 13 1.500 9.500zM13 6l3.500 3.500L13 13 9.500 9.500zM9 10l3.500 3L9 16l-3.500-3z" stroke="#742774" /></>],
  ["Power Automate", <><path d="M.5 2.500h12l5 6.500-5 6.500H.5L6 9z" fill="#fff" stroke="#2b88d8" /><path d="M8 2.500L11 6l-8 9.500M13 3L5 15M15 6l-7 9.500" stroke="#2b88d8" /></>],
];

function VisualizationsPane() {
  return (
    <aside className="w-[181px] shrink-0 border-l border-[#e1dfdd] bg-[#f3f2f1] text-[11px] text-[#252423]">
      <div className="flex h-[38px] items-center justify-between pr-1 pl-2">
        <h2 className="text-[15px] font-semibold">Visualizations</h2>
        <ChevronsRight className="h-5 w-5" strokeWidth={1.5} />
      </div>
      <h3 className="pl-2 leading-4 font-semibold">Build visual</h3>
      <div className="mt-0.5 flex gap-[35px] pl-2">
        <button className="flex h-8 w-8 items-center justify-center rounded-sm bg-[#d0d0d0]" aria-label="Build visual">
          <svg viewBox="0 0 24 24" className="h-6 w-6" fill={GREEN} stroke={INK}>
            <path d="M0 .5h19" />
            <path d="M.5 5.500h23v7H.5zM.5 16.500h23v7H.5z" strokeDasharray="2 1" />
          </svg>
        </button>
        <button className="flex h-8 w-8 items-center justify-center" aria-label="Format visual">
          <svg viewBox="0 0 24 24" className="h-6 w-6" fill="none" stroke={INK} strokeWidth="1.300">
            <path d="M7 23H1V1h10l6 6v3M11 1v6h6M23 9q-6 3-9 9l2 2q5-5 7-11zM14 18q-3 0-4 3t-3 2q6 1 9-3" />
          </svg>
        </button>
      </div>
      <svg viewBox="0 0 180 13" className="h-[13px] w-full" fill="none" stroke="#8a8886">
        <path d="M0 12.500h16l8-8 8 8h148" />
      </svg>
      <div className="grid grid-cols-6 gap-2.5 pt-3 pr-2.5 pl-[11px]">
        {visuals.map(([name, art]) => (
          <button key={name} title={name} className="h-[18px] w-[18px]">
            <svg viewBox="0 0 18 18" className="h-[18px] w-[18px] overflow-visible" fill="none">
              {art}
            </svg>
          </button>
        ))}
      </div>
      <button className="mt-0.5 pl-3 text-sm leading-6" aria-label="More visuals">. . .</button>
      <div className="mt-2.5 border-t border-[#e1dfdd] px-1 pt-2.5">
        <h3 className="pl-2 leading-4">Values</h3>
        <div className="mt-[5px] mr-0.5 flex h-7 items-center border border-dashed border-[#c8c6c4] bg-white px-2.5">Add data fields here</div>
        <h3 className="mt-2.5 pl-2 leading-4 font-semibold">Drill through</h3>
        <div className="mt-[9px] flex h-4 items-center justify-between pr-[18px] pl-2">
          <span id="cross-report">Cross-report</span>
          <button
            role="switch"
            aria-checked="false"
            aria-labelledby="cross-report"
            className="flex h-4 w-8 items-center gap-0.5 rounded-full border border-[#797775] bg-white px-1 text-[9px] text-[#605e5c]"
          >
            <span className="h-2 w-2 rounded-full bg-[#605e5c]" />
            Off
          </button>
        </div>
        <div className="mt-[11px] flex h-4 items-center justify-between pr-[18px] pl-2">
          <span id="keep-filters">Keep all filters</span>
          <button
            role="switch"
            aria-checked="true"
            aria-labelledby="keep-filters"
            className="flex h-4 w-8 items-center justify-center gap-0.5 rounded-full bg-[#117865] text-[9px] text-white"
          >
            On
            <span className="h-2 w-2 rounded-full bg-white" />
          </button>
        </div>
        <div className="mt-2.5 mr-0.5 flex h-[26px] items-center border border-dashed border-[#c8c6c4] bg-white px-2 whitespace-nowrap">
          Add drill-through fields here
        </div>
      </div>
    </aside>
  );
}

function DataPane() {
  return (
    <aside className="w-[180px] shrink-0 border-l border-[#e1dfdd] bg-[#f3f2f1] text-[11px] text-[#252423]">
      <div className="flex h-[38px] items-center justify-between pr-1 pl-2">
        <h2 className="text-[15px] font-semibold">Data</h2>
        <ChevronsRight className="h-5 w-5" strokeWidth={1.5} />
      </div>
      <label className="mt-[7px] mr-1 ml-[5px] flex h-6 items-center gap-2 rounded border border-[#d2d0ce] border-b-[#605e5c] bg-white pr-3 pl-2.5">
        <svg viewBox="0 0 14 14" className="h-3.5 w-3.5 shrink-0" fill="none" stroke="#605e5c">
          <circle cx="6" cy="6" r="5" />
          <path d="M9.500 9.500L14 14" />
        </svg>
        <input aria-label="Search data" placeholder="Search" className="w-full text-xs outline-none placeholder:text-[#707070]" />
      </label>
      <ul className="pt-[9px] pl-3">
        <li className="flex h-6 items-center">
          <ChevronRight className="mr-1 h-3.5 w-3.5 text-[#605e5c]" strokeWidth={1.5} />
          <svg viewBox="0 0 14 14" className="mr-1 h-3.5 w-3.5" fill="none" stroke={INK}>
            <rect x="1" y="1.500" width="12" height="11" rx="2" />
            <path d="M5 1.500v11M9 1.500v11M1 5h12M1 9h12" />
          </svg>
          HR
        </li>
        <li className="flex h-6 items-center">
          <ChevronRight className="mr-1 h-3.5 w-3.5 text-[#605e5c]" strokeWidth={1.5} />
          <svg viewBox="0 0 14 14" className="mr-1 h-3.5 w-3.5" fill="none" stroke={INK}>
            <path d="M6 11.500H3q-2 0-2-2V3q0-2 2-2h7q2 0 2 2v1M5 1v10.500M9 1v3M1 4.500h11M1 8h5" />
            <rect x="7.500" y="5.500" width="6" height="8" fill="#fff" />
            <path d="M7.500 8h6M9.500 8v5M11.500 8v5M7.500 10.500h6" />
          </svg>
          Table
        </li>
      </ul>
    </aside>
  );
}

function StatusBar() {
  return (
    <footer className="flex h-6 shrink-0 items-center border-t border-[#e1dfdd] bg-[#f3f2f1] pt-0.5 pr-2 pl-1 text-[11px] text-[#323130]">
      <span>Page 2 of 2</span>
      <button className="ml-auto px-1 font-bold" aria-label="Zoom out">-</button>
      <input
        type="range"
        aria-label="Zoom"
        defaultValue="50"
        className="h-px w-[100px] appearance-none bg-[#605e5c] [&::-webkit-slider-thumb]:h-[11px] [&::-webkit-slider-thumb]:w-1 [&::-webkit-slider-thumb]:appearance-none [&::-webkit-slider-thumb]:bg-[#605e5c]"
      />
      <button className="ml-1 px-1 text-sm" aria-label="Zoom in">+</button>
      <span className="ml-3">103%</span>
      <button className="mx-[13px]" aria-label="Fit to page">
        <svg viewBox="0 0 16 12" className="h-3 w-4" fill="none" stroke="#605e5c">
          <path d="M.5.500h15v11H.5zM3 5V3h2.500M10.500 3H13v2M13 7v2h-2.500M5.500 9H3V7" />
        </svg>
      </button>
      <a href="#update">Update available (click to download)</a>
    </footer>
  );
}

export default function App() {
  return (
    <div className="relative flex min-h-screen flex-col bg-white font-['Open_Sans','Noto_Sans',sans-serif] text-[11px]">
      <Header />
      <div className="flex grow">
        <Rail />
        <main className="flex min-w-0 grow flex-col">
          <Report />
          <div className="grow" />
          <PageTabs />
        </main>
        <FiltersPane />
        <VisualizationsPane />
        <DataPane />
      </div>
      <StatusBar />
      <div className="pointer-events-none absolute bottom-4 left-[44%] z-20 w-[230px] text-center font-bold whitespace-nowrap text-black/10" aria-hidden="true">
        <p dir="rtl" className="font-['DejaVu_Sans',sans-serif] text-[64px] leading-[64px]">مستقل</p>
        <p className="font-['Liberation_Sans',sans-serif] text-[38px] leading-[48px]">mostaql.com</p>
      </div>
    </div>
  );
}
